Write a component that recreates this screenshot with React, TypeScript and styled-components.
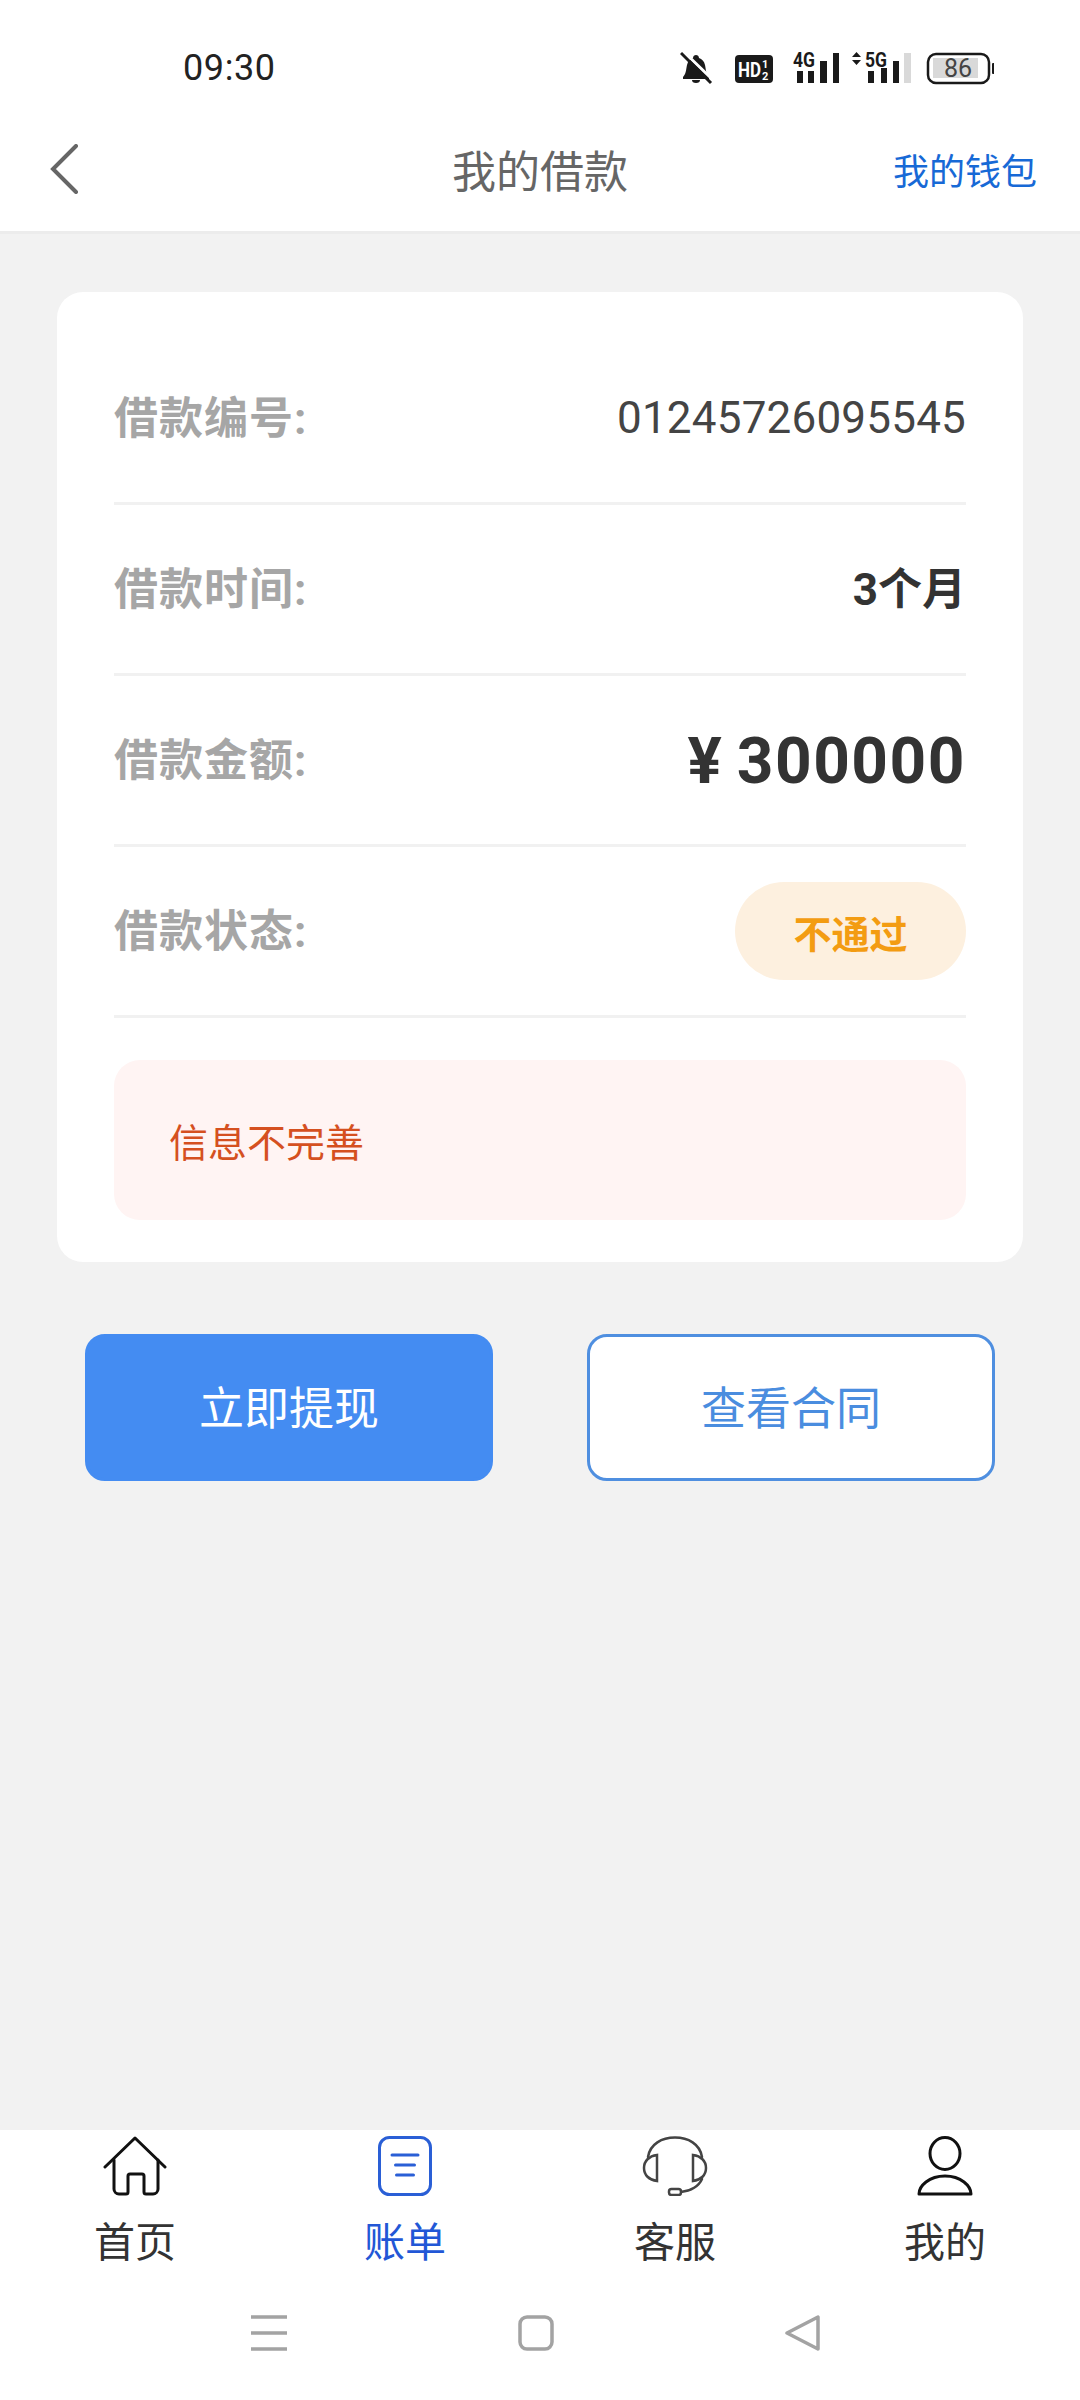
import styled, { createGlobalStyle } from 'styled-components';

const GlobalStyle = createGlobalStyle`
    html, body {
        margin: 0;
        padding: 0;
        background: #f2f2f2;
    }
`;

const FONT = `Roboto, "Noto Sans CJK SC", sans-serif`;

const Page = styled.div`
    width: 1080px;
    height: 2400px;
    display: flex;
    flex-direction: column;
    font-family: ${FONT};
    background: #f2f2f2;
`;

const TopBar = styled.header`
    height: 234px;
    box-sizing: border-box;
    background: #fff;
    border-bottom: 3px solid #ececec;
    display: flex;
    flex-direction: column;
`;

const StatusBar = styled.div`
    height: 106px;
    padding: 30px 86px 0 183px;
    box-sizing: border-box;
    display: flex;
    align-items: center;
    justify-content: space-between;
`;

const Clock = styled.span`
    font-size: 36px;
    letter-spacing: 0.6px;
    color: #222;
`;

const StatusIcons = styled.div`
    display: flex;
    align-items: center;
`;

const NavRow = styled.div`
    flex: 1;
    display: flex;
    align-items: center;
    justify-content: space-between;
    padding: 0 43px 0 49px;
    position: relative;
`;

const Title = styled.h1`
    position: absolute;
    left: 0;
    right: 0;
    margin: 0;
    text-align: center;
    font-size: 44px;
    font-weight: 400;
    color: #666;
`;

const WalletLink = styled.span`
    font-size: 36px;
    color: #1769d6;
`;

const Main = styled.main`
    flex: 1;
    padding: 58px 57px 0;
`;

const Card = styled.section`
    background: #fff;
    border-radius: 26px;
    padding: 42px 57px 42px;
`;

const Row = styled.div`
    height: 171px;
    box-sizing: border-box;
    border-bottom: 3px solid #f1f1f1;
    display: flex;
    align-items: center;
    justify-content: space-between;
`;

const Label = styled.span`
    font-size: 44px;
    font-weight: 700;
    letter-spacing: 1px;
    color: #a6a6a6;
    margin-bottom: 7px;
`;

const PlainValue = styled.span`
    font-size: 44px;
    letter-spacing: 0.2px;
    color: #444;
`;

const BoldValue = styled.span`
    font-size: 44px;
    font-weight: 700;
    color: #333;
    margin-bottom: 6px;
`;

const Amount = styled.span`
    font-size: 64px;
    font-weight: 700;
    letter-spacing: 1.5px;
    word-spacing: -4px;
    color: #333;
    margin-top: 3px;
`;

const StatusPill = styled.span`
    width: 231px;
    height: 98px;
    border-radius: 49px;
    background: #fdf0df;
    color: #f39c12;
    font-size: 38px;
    font-weight: 700;
    display: flex;
    align-items: center;
    justify-content: center;
`;

const Notice = styled.div`
    margin-top: 42px;
    height: 160px;
    box-sizing: border-box;
    padding-left: 55px;
    border-radius: 26px;
    background: #fff4f3;
    color: #d5501f;
    font-size: 39px;
    display: flex;
    align-items: center;
`;

const Actions = styled.div`
    margin-top: 72px;
    padding: 0 28px;
    display: flex;
    justify-content: space-between;
`;

const ActionButton = styled.button<{ $filled?: boolean }>`
    width: 408px;
    height: 147px;
    box-sizing: border-box;
    padding: 0 0 5px;
    border-radius: 20px;
    border: 3px solid ${(p) => (p.$filled ? '#448cf2' : '#4f8fe0')};
    background: ${(p) => (p.$filled ? '#448cf2' : '#fff')};
    color: ${(p) => (p.$filled ? '#fff' : '#4a8ddf')};
    font-family: ${FONT};
    font-size: 45px;
`;

const TabBar = styled.nav`
    height: 139px;
    padding-top: 6px;
    background: #fff;
    display: grid;
    grid-template-columns: repeat(4, 1fr);
`;

const Tab = styled.div<{ $active?: boolean }>`
    display: flex;
    flex-direction: column;
    align-items: center;
    color: ${(p) => (p.$active ? '#2257d6' : '#333')};
    font-size: 41px;
    line-height: 58px;
    gap: 18px;
`;

const TabIcon = styled.svg`
    width: 66px;
    height: 60px;
    display: block;
`;

const SystemBar = styled.div`
    flex: 0 0 125px;
    background: #fff;
    padding: 40px 8px 0 0;
    box-sizing: border-box;
    display: flex;
    justify-content: center;
    align-items: flex-start;
    gap: 231px;
`;

const SysIcon = styled.svg`
    width: 36px;
    height: 36px;
    display: block;
`;

const rows = [
    { label: '借款编号:', value: <PlainValue>01245726095545</PlainValue> },
    { label: '借款时间:', value: <BoldValue>3个月</BoldValue> },
    { label: '借款金额:', value: <Amount>¥ 300000</Amount> },
    { label: '借款状态:', value: <StatusPill>不通过</StatusPill> },
];

const App = () => {
    return (
        <Page>
            <GlobalStyle />
            <TopBar>
                <StatusBar>
                    <Clock>09:30</Clock>
                    <StatusIcons>
                        <svg width="314" height="40" viewBox="0 0 314 40">
                            <path d="M3 29c3-3 3-7 4-12 1-4 3-6 6-7 0-4 6-4 6 0 3 1 5 3 6 7 1 5 1 9 4 12v2H3z" fill="#1a1a1a" />
                            <path d="M12 32a4 3 0 0 0 8 0z" fill="#1a1a1a" />
                            <path d="M3 3l30 29" stroke="#fff" strokeWidth="3" />
                            <path d="M1 5l30 30" stroke="#1a1a1a" strokeWidth="3" />
                            <rect x="55" y="7" width="38" height="28" rx="4" fill="#1a1a1a" />
                            <text x="58" y="29" fontSize="20" fontWeight="700" fill="#fff" fontFamily="Roboto" textLength="23" lengthAdjust="spacingAndGlyphs">HD</text>
                            <text x="82" y="20" fontSize="11" fontWeight="700" fill="#fff" fontFamily="Roboto">1</text>
                            <text x="82" y="32" fontSize="11" fontWeight="700" fill="#fff" fontFamily="Roboto">2</text>
                            <text x="113" y="19" fontSize="21" fontWeight="700" fill="#1a1a1a" fontFamily="Roboto" textLength="22" lengthAdjust="spacingAndGlyphs">4G</text>
                            <rect x="117" y="23" width="6" height="12" fill="#1a1a1a" />
                            <rect x="128" y="23" width="6" height="12" fill="#1a1a1a" />
                            <rect x="140" y="13" width="7" height="22" fill="#1a1a1a" />
                            <rect x="153" y="5" width="6" height="30" fill="#1a1a1a" />
                            <path d="M172 9l4.500-5 4.500 5zM172 12l4.500 5 4.500-5z" fill="#1a1a1a" />
                            <text x="185" y="19" fontSize="21" fontWeight="700" fill="#1a1a1a" fontFamily="Roboto" textLength="22" lengthAdjust="spacingAndGlyphs">5G</text>
                            <rect x="188" y="23" width="6" height="12" fill="#1a1a1a" />
                            <rect x="201" y="20" width="6" height="15" fill="#1a1a1a" />
                            <rect x="213" y="13" width="6" height="22" fill="#1a1a1a" />
                            <rect x="224" y="5" width="7" height="30" fill="#d9d9d9" />
                            <rect x="248" y="6" width="61" height="29" rx="8" fill="none" stroke="#1a1a1a" strokeWidth="2.5" />
                            <rect x="253" y="10" width="45" height="20" fill="#d9d9d9" />
                            <rect x="312" y="15" width="2.500" height="11" rx="1" fill="#1a1a1a" />
                            <text x="264" y="29" fontSize="25" fill="#444" fontFamily="Roboto">86</text>
                        </svg>
                    </StatusIcons>
                </StatusBar>
                <NavRow>
                    <svg width="32" height="50" viewBox="0 0 32 50">
                        <path d="M27 2L4 25l23 23" fill="none" stroke="#666" strokeWidth="4" strokeLinecap="round" />
                    </svg>
                    <Title>我的借款</Title>
                    <WalletLink>我的钱包</WalletLink>
                </NavRow>
            </TopBar>

            <Main>
                <Card>
                    {rows.map((row) => (
                        <Row key={row.label}>
                            <Label>{row.label}</Label>
                            {row.value}
                        </Row>
                    ))}
                    <Notice>信息不完善</Notice>
                </Card>
                <Actions>
                    <ActionButton $filled>立即提现</ActionButton>
                    <ActionButton>查看合同</ActionButton>
                </Actions>
            </Main>

            <TabBar>
                <Tab>
                    <TabIcon viewBox="0 0 66 60" fill="none" stroke="#111" strokeWidth="3" strokeLinecap="round" strokeLinejoin="round">
                        <path d="M3 31L33 2l30 29" />
                        <path d="M12 24v29a5 5 0 0 0 5 5h7a2 2 0 0 0 2-2V40a2 2 0 0 1 2-2h12a2 2 0 0 1 2 2v16a2 2 0 0 0 2 2h7a5 5 0 0 0 5-5V24" />
                    </TabIcon>
                    首页
                </Tab>
                <Tab $active>
                    <TabIcon viewBox="0 0 66 60" fill="none" stroke="#2a5fd6" strokeWidth="3" strokeLinecap="round">
                        <rect x="7.500" y="1.500" width="51" height="57" rx="10" />
                        <path d="M20 19h26M23.500 29h19M24.500 39h17" />
                    </TabIcon>
                    账单
                </Tab>
                <Tab>
                    <TabIcon viewBox="0 0 66 60" fill="none" stroke="#444" strokeWidth="2.5" strokeLinecap="round">
                        <path d="M6 21C8 8 20 1.500 33 1.500S58 8 60 21" />
                        <path d="M15 19v26C7 44 2 39 2 32s5-12 13-13zM51 19v26c8-1 13-6 13-13s-5-12-13-13z" />
                        <path d="M60 43c-3 7-11 12-21 13" />
                        <rect x="27" y="53" width="12" height="6" rx="2.500" />
                    </TabIcon>
                    客服
                </Tab>
                <Tab>
                    <TabIcon viewBox="0 0 66 60" fill="none" stroke="#111" strokeWidth="3" strokeLinejoin="round">
                        <ellipse cx="33" cy="17.500" rx="15" ry="16" />
                        <path d="M7 58c0-8 10-18 26-18s26 10 26 18z" />
                    </TabIcon>
                    我的
                </Tab>
            </TabBar>

            <SystemBar>
                <SysIcon viewBox="0 0 36 36" stroke="#a3a3a3" strokeWidth="3.5" fill="none">
                    <path d="M0 2h36M0 18h36M0 34h36" />
                </SysIcon>
                <SysIcon viewBox="0 0 36 36" stroke="#a3a3a3" strokeWidth="3.5" fill="none">
                    <rect x="2" y="2" width="32" height="32" rx="7" />
                </SysIcon>
                <SysIcon viewBox="0 0 36 36" stroke="#a3a3a3" strokeWidth="3.5" fill="none" strokeLinejoin="round">
                    <path d="M2 18L33 2v32z" />
                </SysIcon>
            </SystemBar>
        </Page>
    );
};

export default App;
